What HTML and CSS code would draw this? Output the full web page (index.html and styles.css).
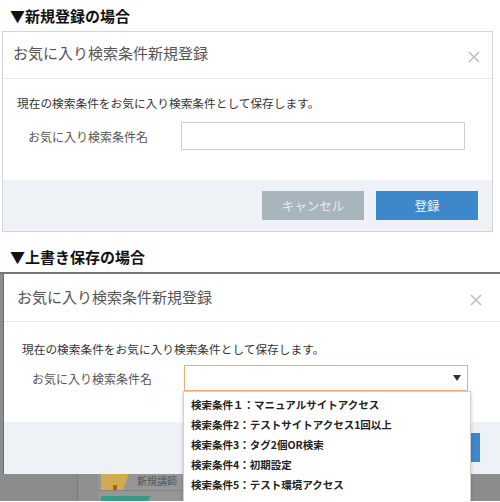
FILE: index.html
```html
<!DOCTYPE html>
<html lang="ja">
<head>
<meta charset="utf-8">
<link rel="stylesheet" href="styles.css">
</head>
<body>
<h2 class="case">▼新規登録の場合</h2>
<div class="modal m1">
  <div class="mh">
    <span class="mt">お気に入り検索条件新規登録</span>
    <svg class="close" viewBox="0 0 12 12"><path d="M1 1L11 11M11 1L1 11" stroke="#bdbdbd" stroke-width="1.5" fill="none"/></svg>
  </div>
  <div class="mb">
    <p class="desc">現在の検索条件をお気に入り検索条件として保存します。</p>
    <div class="row">
      <span class="label">お気に入り検索条件名</span>
      <div class="input"></div>
    </div>
  </div>
  <div class="mf">
    <button class="btn cancel">キャンセル</button>
    <button class="btn ok">登録</button>
  </div>
</div>

<h2 class="case case-2">▼上書き保存の場合</h2>
<div class="shot">
  <div class="modal m2">
    <div class="mh">
      <span class="mt">お気に入り検索条件新規登録</span>
      <svg class="close" viewBox="0 0 12 12"><path d="M1 1L11 11M11 1L1 11" stroke="#bdbdbd" stroke-width="1.5" fill="none"/></svg>
    </div>
    <div class="mb">
      <p class="desc">現在の検索条件をお気に入り検索条件として保存します。</p>
      <div class="row">
        <span class="label">お気に入り検索条件名</span>
        <div class="input select">
          <span class="arrow"></span>
          <ul class="dropdown">
            <li>検索条件１：マニュアルサイトアクセス</li>
            <li>検索条件2：テストサイトアクセス1回以上</li>
            <li>検索条件3：タグ2個OR検索</li>
            <li>検索条件4：初期設定</li>
            <li>検索条件5：テスト環境アクセス</li>
          </ul>
        </div>
      </div>
    </div>
    <div class="mf">
      <button class="btn cancel">キャンセル</button>
      <button class="btn ok">登録</button>
    </div>
  </div>
  <div class="bgui">
    <div class="bg-left"></div>
    <div class="bg-gap"></div>
    <div class="bg-panel">
      <div class="bg-top">
        <span class="bg-yellow"><span class="bg-dot"></span></span>
        <span class="bg-text">新規講師</span>
      </div>
      <div class="bg-bottom"><span class="bg-teal"></span></div>
    </div>
  </div>
</div>
</body>
</html>
```

FILE: styles.css
```css
* { box-sizing: border-box; }

body {
  margin: 0;
  width: 500px;
  height: 502px;
  overflow: hidden;
  background: #fff;
  font-family: "Noto Sans CJK JP", "Noto Sans", sans-serif;
}

.case {
  margin: 0;
  padding-left: 10px;
  font-size: 15px;
  font-weight: 700;
  line-height: 31px;
  height: 31px;
  color: #111;
}

.case-2 {
  padding-top: 10px;
  height: 40px;
  line-height: 30px;
}

.modal { background: #fff; }

.m1 {
  margin-left: 2px;
  width: 491px;
  border: 1px solid #d4d4d4;
}

.mh {
  display: flex;
  align-items: center;
  justify-content: space-between;
  border-bottom: 1px solid #e8e8e8;
}

.m1 .mh { height: 47px; padding: 0 12px 4px 10px; }
.m2 .mh { height: 48px; padding: 0 18px 1px 13px; }

.mt {
  font-size: 15px;
  line-height: 20px;
  color: #555;
}

.close { width: 12px; height: 12px; }
.m1 .close { margin-top: 8px; }
.m2 .close { margin-top: 6px; }

.m1 .mb { padding: 16px 0 30px 14px; }
.m2 .mb { padding: 19px 0 31px 18px; }

.desc {
  margin: 0;
  font-size: 11.7px;
  line-height: 16px;
  color: #333;
}

.row {
  display: flex;
  align-items: center;
}

.m1 .row { margin: 11px 0 0 11px; }
.m2 .row { margin: 8px 0 0 10px; }

.label {
  width: 153px;
  font-size: 12px;
  color: #555;
}
.m2 .label { width: 152px; }

.input {
  width: 284px;
  height: 28px;
  border: 1px solid #cfcfcf;
  background: #fff;
}

.select {
  height: 26px;
  border-color: #f2ad73;
  position: relative;
  display: flex;
  align-items: center;
  justify-content: flex-end;
  padding-right: 6px;
}

.arrow {
  width: 0;
  height: 0;
  border-left: 4px solid transparent;
  border-right: 4px solid transparent;
  border-top: 6px solid #333;
}

.dropdown {
  position: absolute;
  top: 25px;
  left: -2px;
  width: 288px;
  height: 120px;
  margin: 0;
  padding: 3px 0 0 7px;
  list-style: none;
  background: #fff;
  border: 1px solid #d0d0d0;
  box-shadow: 0 2px 4px rgba(0, 0, 0, 0.2);
}

.dropdown li {
  font-size: 10.5px;
  font-weight: 700;
  line-height: 20px;
  color: #222;
  white-space: nowrap;
}

.mf {
  background: #eef1f6;
  display: flex;
  justify-content: flex-end;
  gap: 12px;
}

.m1 .mf { padding: 11px 14px 11px 0; }
.m2 .mf { padding: 11px 20px 12px 0; }

.btn {
  width: 102px;
  height: 29px;
  border: 0;
  padding: 0;
  font-family: inherit;
  font-size: 12.5px;
}

.cancel { background: #a9b5bd; color: #e8ecef; }
.ok { background: #3d88ca; color: #eef4fb; }

.shot {
  height: 229px;
  background: #8c8c8c;
  border-top: 2px solid #767676;
  padding-left: 3px;
  overflow: hidden;
}

.m2 {
  width: 497px;
  border-left: 1px solid #6a6a6a;
}

.bgui {
  display: flex;
  height: 27px;
}

.bg-left {
  width: 75px;
  border-right: 1px solid #7b7b7b;
}

.bg-gap {
  width: 20px;
  background: #8f8f8f;
}

.bg-panel {
  width: 357px;
  background: #969696;
  border-right: 1px solid #7e7e7e;
}

.bg-top {
  height: 17px;
  display: flex;
  align-items: flex-start;
  border-bottom: 1px solid #848484;
  padding-left: 3px;
}

.bg-yellow {
  width: 28px;
  height: 16px;
  background: #d2ab4f;
  clip-path: polygon(0 0, 100% 0, 78% 100%, 0 100%);
  display: flex;
  align-items: flex-end;
  padding-left: 12px;
}

.bg-dot {
  width: 4px;
  height: 5px;
  background: #9a6b12;
}

.bg-text {
  margin-left: 8px;
  margin-top: 1px;
  font-size: 10px;
  line-height: 12px;
  color: #555;
}

.bg-bottom {
  padding: 5px 0 0 3px;
}

.bg-teal {
  display: block;
  width: 50px;
  height: 6px;
  background: #3a9a88;
  clip-path: polygon(0 0, 100% 0, 92% 100%, 0 100%);
}
```
